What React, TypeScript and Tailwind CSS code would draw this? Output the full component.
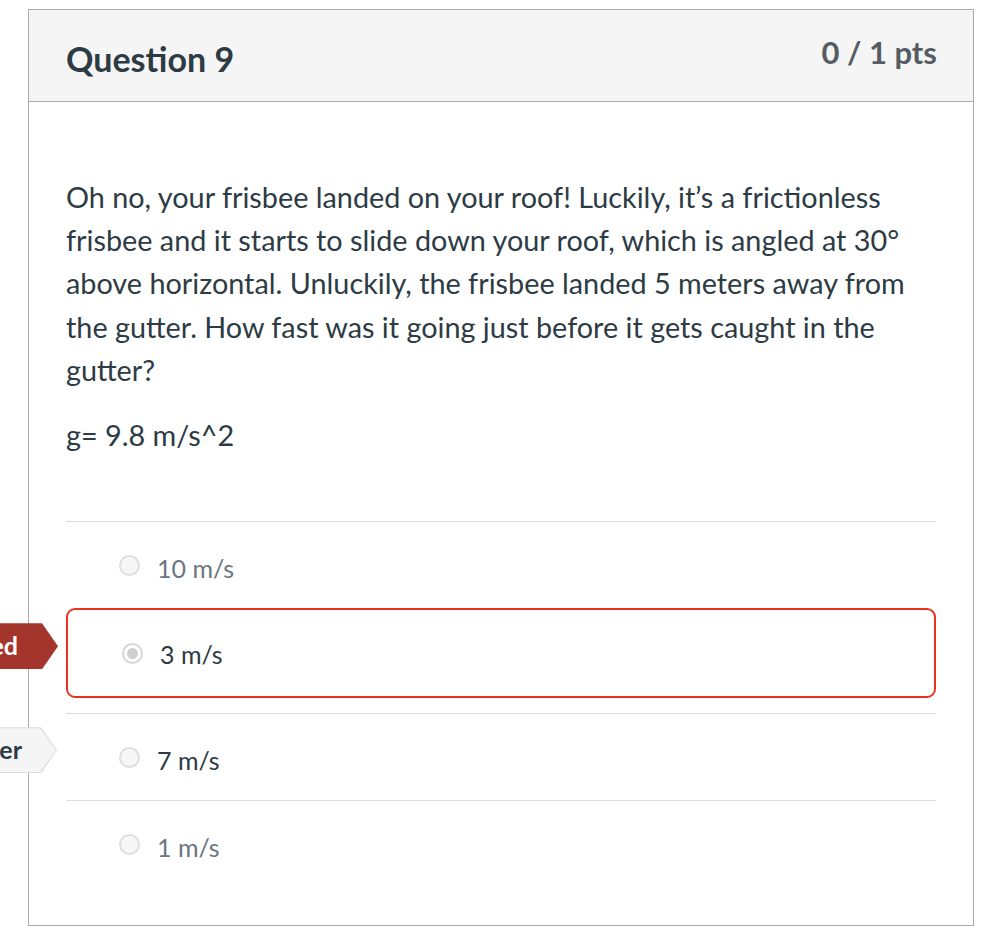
import React from 'react';

type Answer = {
  text: string;
  selected?: boolean;
  correct?: boolean;
  dim?: boolean;
};

const answers: Answer[] = [
  { text: '10 m/s', dim: true },
  { text: '3 m/s', selected: true },
  { text: '7 m/s', correct: true },
  { text: '1 m/s', dim: true },
];

const Radio = ({ checked }: { checked?: boolean }) => (
  <span
    className={
      'flex h-[21px] w-[21px] shrink-0 items-center justify-center rounded-full border-2 ' +
      (checked ? 'border-[#d6d6d6] bg-white' : 'border-[#dfdfdf] bg-[#f7f7f7]')
    }
  >
    {checked && <span className="h-[11px] w-[11px] rounded-full bg-[#cfcfcf]" />}
  </span>
);

const YouAnsweredTag = () => (
  <div className="absolute right-full top-[13px] mr-[10px] flex h-[46px] items-center whitespace-nowrap bg-[#a4352c] pl-4 pr-[40px] text-[25px] font-bold text-white [clip-path:polygon(0_0,calc(100%_-_16px)_0,100%_50%,calc(100%_-_16px)_100%,0_100%)]">
    You Answered
  </div>
);

const CorrectTag = () => (
  <div className="absolute right-full top-[13px] mr-[9px] h-[46px] bg-[#dcdcdc] [clip-path:polygon(0_0,calc(100%_-_16px)_0,100%_50%,calc(100%_-_16px)_100%,0_100%)]">
    <div className="m-px flex h-[44px] items-center whitespace-nowrap bg-[#f5f5f5] pl-4 pr-[34px] text-[25px] font-bold text-[#2d3b45] [clip-path:polygon(0_0,calc(100%_-_16px)_0,100%_50%,calc(100%_-_16px)_100%,0_100%)]">
      Correct Answer
    </div>
  </div>
);

const AnswerRow = ({ a }: { a: Answer }) => {
  if (a.selected) {
    return (
      <div className="relative mb-[15px] flex h-[90px] items-start rounded-[9px] border-2 border-[#e8321f] pl-[54px] pt-[33px]">
        <YouAnsweredTag />
        <Radio checked />
        <span className="ml-[17px] -mt-[3px] text-[25px] leading-[28px] text-[#2d3b45]">{a.text}</span>
      </div>
    );
  }
  return (
    <div className="relative flex h-[87px] items-start border-t border-[#dedede] pl-[53px] pt-[33px]">
      {a.correct && <CorrectTag />}
      <Radio />
      <span
        className={
          'ml-[17px] -mt-[1px] text-[25px] leading-[28px] ' + (a.dim ? 'text-[#6b7681]' : 'text-[#2d3b45]')
        }
      >
        {a.text}
      </span>
    </div>
  );
};

export default function App() {
  return (
    <div className="min-h-screen bg-white pl-[28px] pt-[9px] font-['Lato','Noto_Sans',sans-serif] text-[#2d3b45]">
      <div className="relative h-[917px] w-[946px] border border-[#ababab]">
        <div className="flex h-[92px] items-start justify-between border-b border-[#ababab] bg-[#f5f5f5] pl-[37px] pr-[36px]">
          <h2 className="mt-[29px] text-[34px] font-bold leading-[40px] text-[#2d3b45]">Question 9</h2>
          <div className="mt-[24px] text-[31px] font-bold leading-[36px] text-[#555d63]">0 / 1 pts</div>
        </div>

        <div className="px-[37px] pt-[74px]">
          <p className="text-[28.8px] leading-[43.2px]">
            Oh no, your frisbee landed on your roof! Luckily, it’s a frictionless frisbee and it starts to slide
            down your roof, which is angled at 30° above horizontal. Unluckily, the frisbee landed 5 meters away
            from the gutter. How fast was it going just before it gets caught in the gutter?
          </p>
          <p className="mt-[22px] text-[28.8px] leading-[43.2px]">g= 9.8 m/s^2</p>

          <div className="mt-[64px]">
            {answers.map((a) => (
              <AnswerRow key={a.text} a={a} />
            ))}
          </div>
        </div>
      </div>
    </div>
  );
}
